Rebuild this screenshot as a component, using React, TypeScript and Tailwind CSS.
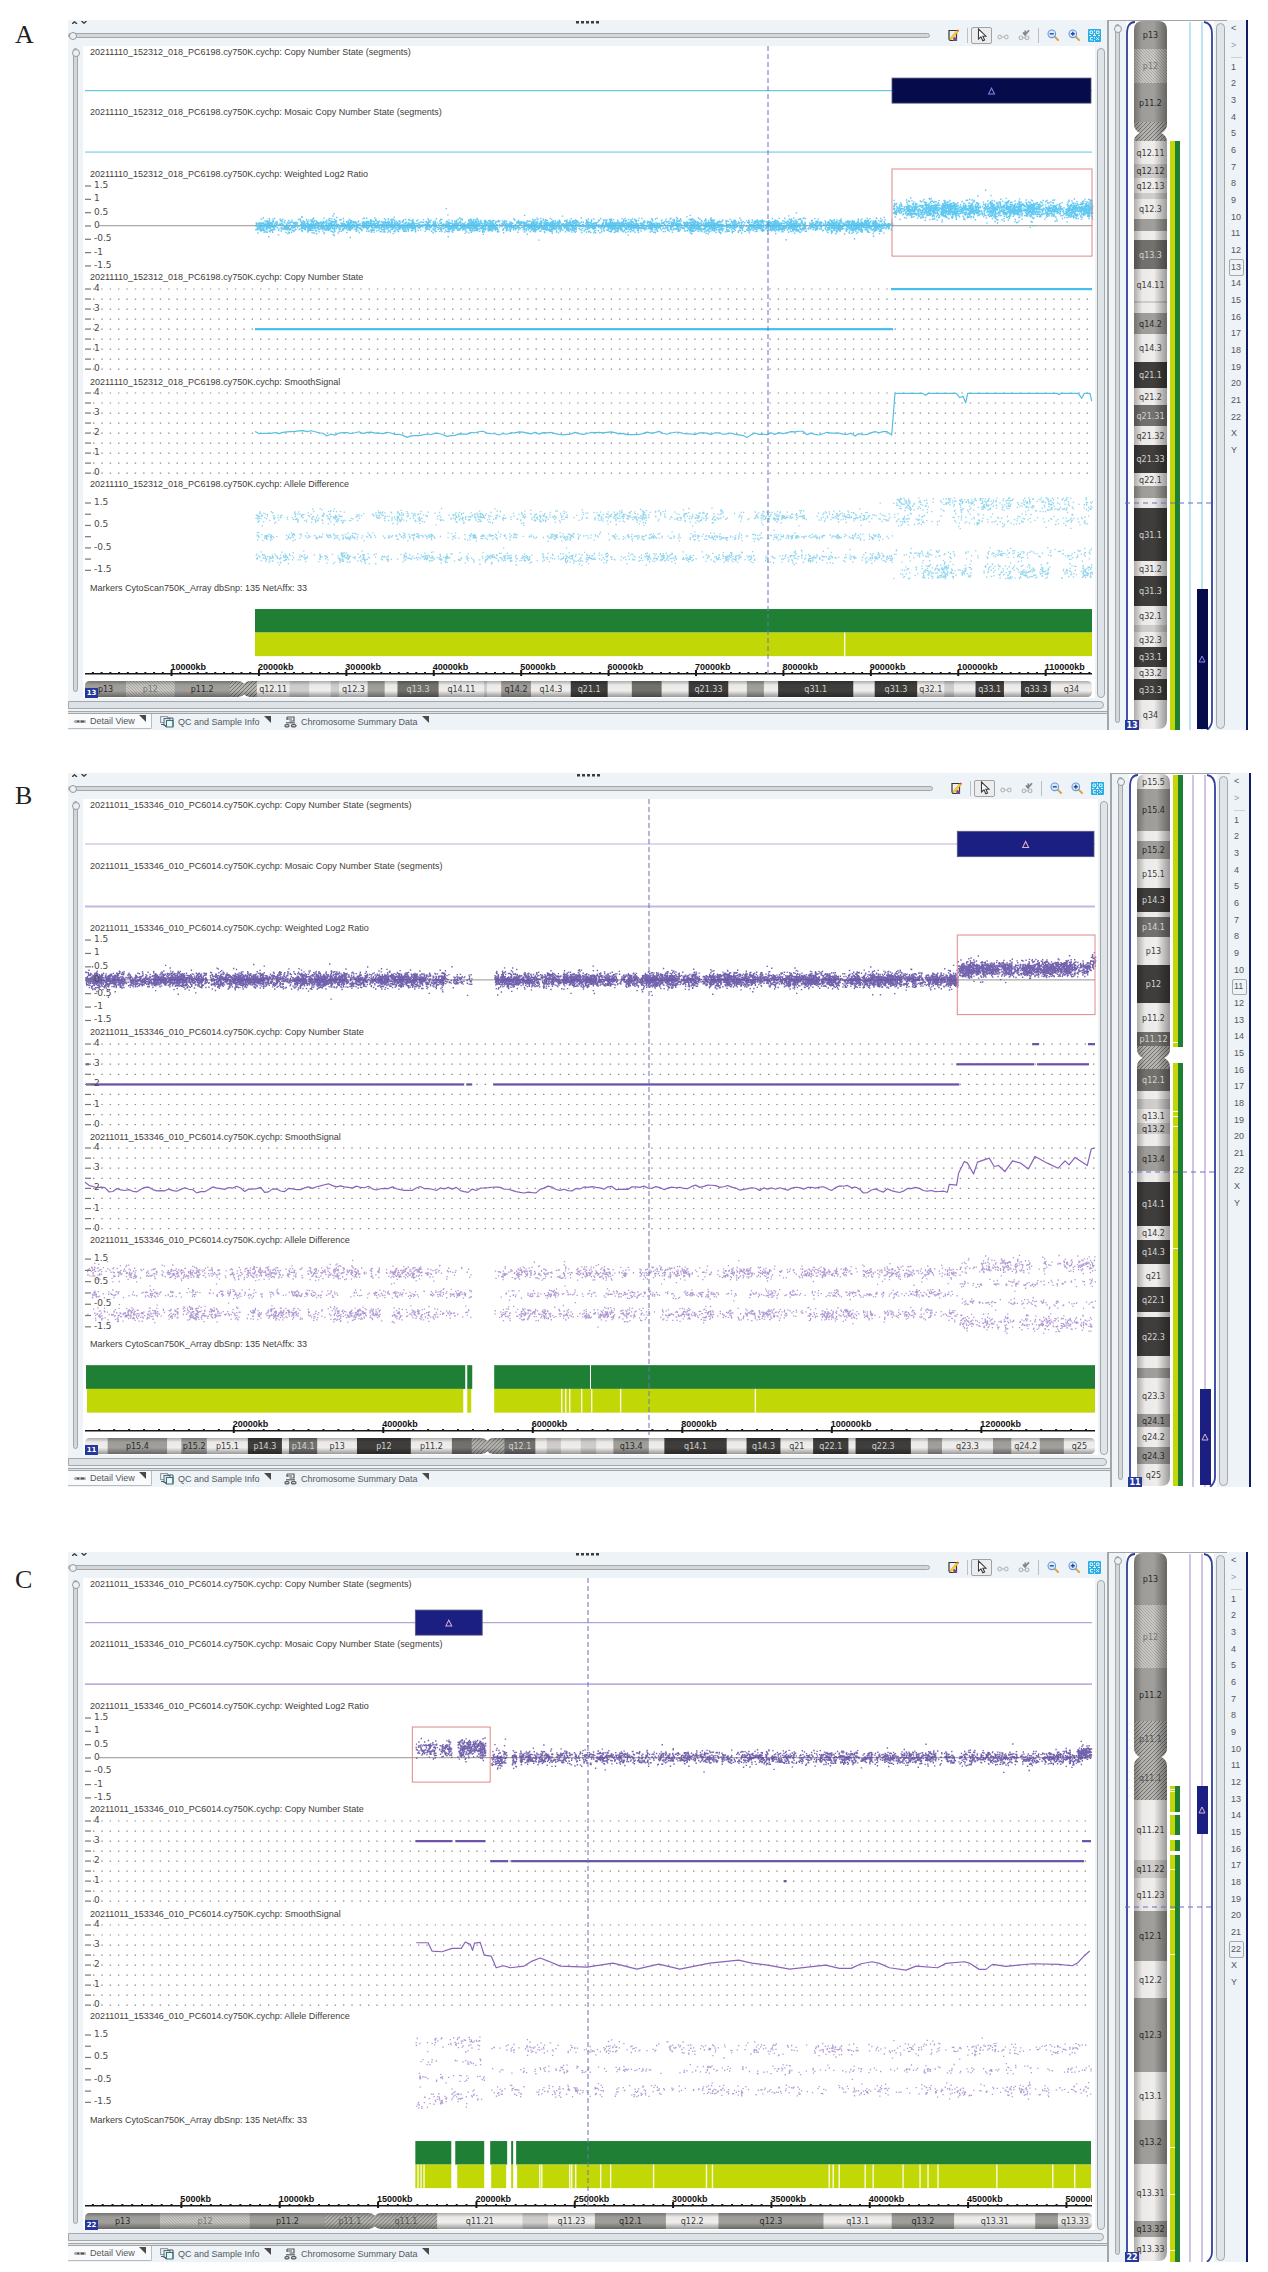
import React from "react";

type Tone = "light" | "pale" | "mid" | "dark" | "black" | "hatch" | "stalk";
type Band = [end: number, tone: Tone, label?: string];
type Span = [number, number];
type Cloud = { x: Span; y: number; s: number; n: number; yEnd?: number };
type Level = { x: Span; v: number };

type PanelData = {
  id: string;
  letter: string;
  letterClass: string;
  rowClass: string;
  panelClass: string;
  sample: string;
  height: number;
  x0: number;
  x1: number;
  point: string;
  pointSoft: string;
  line1: string;
  line2: string;
  sideLine: string;
  block: string;
  blockMark: string;
  segment: Span;
  box: [number, number, number, number];
  ratio: Cloud[];
  levels: Level[];
  smooth: Span[];
  allele: Cloud[];
  green: Span[];
  lime: Span[];
  limeGaps: number[];
  cursor: number;
  rulerStart: number;
  rulerEnd: number;
  major: number;
  chromosome: string;
  bands: Band[];
  waist: number;
  sideGreen: Span[];
  sideGaps: number[];
  sideBlock: Span;
  sideCursor: number;
};

const SANS = "font-['Liberation_Sans',Arial,sans-serif]";
const DEJA = "'DejaVu Sans', Verdana, sans-serif";

const TONES: Record<Tone, { fill: string; text: string }> = {
  light: { fill: "#efeeec", text: "#3a3a3a" },
  pale: { fill: "#cfcecc", text: "#2d2d2d" },
  mid: { fill: "#a09f9b", text: "#2a2a2a" },
  dark: { fill: "#72716e", text: "#d2d2d0" },
  black: { fill: "#3f3e3c", text: "#d2d2d0" },
  hatch: { fill: "url(#hatch)", text: "#777674" },
  stalk: { fill: "url(#stalk)", text: "#555452" },
};

function random(seed: number) {
  let a = seed;
  return () => {
    a = (a + 0x6d2b79f5) | 0;
    let t = Math.imul(a ^ (a >>> 15), 1 | a);
    t = (t + Math.imul(t ^ (t >>> 7), 61 | t)) ^ t;
    return ((t ^ (t >>> 14)) >>> 0) / 4294967296;
  };
}

function scatter(clouds: Cloud[], seed: number, clump: number, dot: number, min = -99, max = 999) {
  const r = random(seed);
  let d = "";
  clouds.forEach((c, i) => {
    const w = c.x[1] - c.x[0];
    const count = Math.round(w * c.n);
    for (let k = 0; k < count; k++) {
      const x = c.x[0] + r() * w;
      const density =
        0.5 + 0.28 * Math.sin(x * 0.31 + seed + i * 2) + 0.28 * Math.sin(x * 0.083 + i * 5) + 0.2 * Math.sin(x * 0.9 + i);
      if (r() < clump * (1 - density)) continue;
      let g = (r() + r() + r() + r() - 2) * 1.7;
      if (r() < 0.04) g *= 1.9;
      const mid = c.yEnd === undefined ? c.y : c.y + ((c.yEnd - c.y) * (x - c.x[0])) / w;
      const y = mid + g * c.s;
      if (y < min || y > max) continue;
      d += `M${x.toFixed(1)} ${y.toFixed(1)}h${dot}v${dot}h-${dot}z`;
    }
  });
  return d;
}

function wander(from: number, to: number, level: number, amp: number, seed: number): Span[] {
  const r = random(seed);
  const out: Span[] = [];
  let y = 0;
  for (let x = from; x < to; x += 4) {
    y = y * 0.65 + (r() - 0.5) * amp * 2;
    if (r() < 0.04) y += amp * 1.1;
    out.push([x, level + y]);
  }
  return out;
}

const crop = (pts: Span[], x0: number, top: number): Span[] =>
  pts.map(([x, y]) => [x0 + x / 3, (y - top) / 3 + 5] as Span);

const bandsA: Band[] = [
  [29, "mid", "p13"], [63, "hatch", "p12"], [102, "mid", "p11.2"], [121, "stalk"],
  [144, "light", "q12.11"], [158, "pale", "q12.12"], [173, "light", "q12.13"], [179, "pale"],
  [199, "light", "q12.3"], [211, "mid"], [220, "light"], [249, "dark", "q13.3"],
  [281, "light", "q14.11"], [283, "pale"], [293, "light"], [314, "mid", "q14.2"],
  [342, "light", "q14.3"], [368, "black", "q21.1"], [385, "light", "q21.2"], [406, "dark", "q21.31"],
  [425, "light", "q21.32"], [453, "black", "q21.33"], [466, "light", "q22.1"], [478, "mid"],
  [488, "light"], [541, "black", "q31.1"], [556, "light", "q31.2"], [586, "black", "q31.3"],
  [605, "light", "q32.1"], [612, "pale"], [627, "light", "q32.3"], [647, "black", "q33.1"],
  [659, "light", "q33.2"], [680, "black", "q33.3"], [709, "light", "q34"],
];

const bandsB: Band[] = [
  [16, "light", "p15.5"], [58, "mid", "p15.4"], [68, "light"], [86, "mid", "p15.2"],
  [115, "light", "p15.1"], [139, "black", "p14.3"], [144, "light"], [164, "dark", "p14.1"],
  [192, "light", "p13"], [230, "black", "p12"], [259, "light", "p11.2"], [273, "dark", "p11.12"],
  [296, "stalk"], [318, "dark", "q12.1"], [326, "light"], [336, "pale"], [350, "light", "q13.1"],
  [361, "pale", "q13.2"], [373, "light"], [398, "mid", "q13.4"], [409, "light"],
  [453, "black", "q14.1"], [467, "light", "q14.2"], [491, "black", "q14.3"], [514, "light", "q21"],
  [539, "black", "q22.1"], [544, "light"], [583, "black", "q22.3"], [595, "light"], [605, "mid"],
  [641, "light", "q23.3"], [654, "mid", "q24.1"], [674, "light", "q24.2"], [691, "mid", "q24.3"],
  [713, "light", "q25"],
];

const bandsC: Band[] = [
  [53, "mid", "p13"], [116, "hatch", "p12"], [169, "mid", "p11.2"], [204, "stalk", "p11.1"],
  [248, "stalk", "q11.1"], [308, "light", "q11.21"], [326, "pale", "q11.22"], [359, "light", "q11.23"],
  [409, "mid", "q12.1"], [446, "light", "q12.2"], [520, "mid", "q12.3"], [568, "light", "q13.1"],
  [612, "mid", "q13.2"], [669, "light", "q13.31"], [685, "mid", "q13.32"], [709, "light", "q13.33"],
];

const violet = {
  point: "#5b47a0",
  pointSoft: "#8764bb",
  sideLine: "#b59dd3",
  block: "#1b1f82",
  blockMark: "#d9b3cf",
  sample: "20211011_153346_010_PC6014.cy750K.cychp:",
};

const panels: PanelData[] = [
  {
    id: "a",
    letter: "A",
    letterClass: "pt-[1px]",
    rowClass: "pt-5 pr-5",
    panelClass: "min-h-[710px]",
    sample: "20211110_152312_018_PC6198.cy750K.cychp:",
    height: 710,
    x0: 86,
    x1: 1093,
    point: "#45bfee",
    pointSoft: "#55bfe4",
    line1: "#6cc9df",
    line2: "#a6dcf0",
    sideLine: "#93d3ec",
    block: "#060c4b",
    blockMark: "#8f86e8",
    segment: [893, 1092],
    box: [893, -11, 200, 87],
    ratio: [
      { x: [256, 893], y: 45, s: 3, n: 14 },
      { x: [894, 1093], y: 29, s: 4, n: 19 },
    ],
    levels: [
      { x: [256, 894], v: 2 },
      { x: [892, 1093], v: 4 },
    ],
    smooth: [
      ...wander(256, 892, 45, 1.6, 7),
      ...crop(
        [[158, 192], [168, 67], [250, 67], [260, 73], [267, 67], [352, 67], [362, 80], [372, 76], [380, 95], [386, 67], [655, 67], [660, 71], [665, 67], [718, 67], [728, 82], [736, 67], [753, 67], [758, 90]],
        840,
        66
      ),
    ],
    allele: [
      { x: [256, 893], y: 26, s: 3, n: 3 },
      { x: [256, 893], y: 46, s: 1.8, n: 2 },
      { x: [256, 893], y: 67, s: 2.6, n: 3 },
      { x: [894, 1093], y: 12, s: 5, n: 4.4 },
      { x: [894, 1093], y: 30, s: 3, n: 1.5 },
      { x: [894, 1093], y: 63, s: 3, n: 1.5 },
      { x: [894, 1093], y: 82, s: 5, n: 4.4 },
    ],
    green: [[256, 1093]],
    lime: [[256, 1093]],
    limeGaps: [845],
    cursor: 768,
    rulerStart: 100,
    rulerEnd: 115300,
    major: 10000,
    chromosome: "13",
    bands: bandsA,
    waist: 112,
    sideGreen: [[121, 710]],
    sideGaps: [],
    sideBlock: [569, 709],
    sideCursor: 483,
  },
  {
    ...violet,
    id: "b",
    letter: "B",
    letterClass: "pt-[9px]",
    rowClass: "pt-[43px] pr-[17px]",
    panelClass: "min-h-[714px]",
    height: 714,
    x0: 84,
    x1: 1096,
    line1: "#d6caea",
    line2: "#c4b5e1",
    segment: [958, 1095],
    box: [958, 1, 138, 79],
    ratio: [
      { x: [84, 446], y: 45, s: 3.6, n: 18 },
      { x: [446, 471], y: 45, s: 3, n: 5 },
      { x: [494, 958], y: 45, s: 3.4, n: 18 },
      { x: [958, 1088], y: 34, s: 3.6, n: 20 },
      { x: [1088, 1096], y: 31, yEnd: 25, s: 3.4, n: 20 },
    ],
    levels: [
      { x: [85, 88], v: 3 },
      { x: [85, 464], v: 2 },
      { x: [466, 472], v: 2 },
      { x: [493, 960], v: 2 },
      { x: [957, 1035], v: 3 },
      { x: [1038, 1090], v: 3 },
      { x: [1033, 1040], v: 4 },
      { x: [1089, 1096], v: 4 },
    ],
    smooth: [
      [84, 39],
      [88, 42],
      ...wander(92, 950, 45, 2.2, 23),
      ...crop(
        [[330, 188], [352, 190], [358, 155], [375, 120], [385, 125], [403, 157], [415, 122], [450, 110], [465, 135], [478, 132], [497, 150], [520, 118], [545, 125], [568, 142], [588, 105], [625, 125], [657, 140], [678, 118], [690, 130], [708, 108], [745, 132], [757, 82], [767, 80]],
        840,
        80
      ),
    ],
    allele: [
      { x: [86, 115], y: 25, s: 4, n: 2.4 },
      { x: [115, 430], y: 26, s: 3.2, n: 4.4 },
      { x: [430, 471], y: 26, s: 3, n: 1.4 },
      { x: [494, 958], y: 26, s: 3, n: 3.8 },
      { x: [90, 471], y: 47, s: 2, n: 2.1 },
      { x: [494, 958], y: 47, s: 2, n: 2 },
      { x: [86, 115], y: 67, s: 3.5, n: 2.4 },
      { x: [115, 430], y: 67, s: 3.2, n: 4.4 },
      { x: [430, 471], y: 67, s: 3, n: 1.4 },
      { x: [494, 958], y: 67, s: 3, n: 3.8 },
      { x: [960, 1096], y: 20, yEnd: 17, s: 3.8, n: 4 },
      { x: [960, 1096], y: 38, yEnd: 36, s: 2, n: 1.4 },
      { x: [960, 1096], y: 55, yEnd: 57, s: 2, n: 1.4 },
      { x: [960, 1096], y: 75, yEnd: 77, s: 3.8, n: 4 },
    ],
    green: [[85, 465], [467, 472], [494, 590], [591, 1096]],
    lime: [[86, 463], [467, 471], [494, 1096]],
    limeGaps: [561, 565, 569, 581, 591, 620, 755],
    cursor: 648,
    rulerStart: 100,
    rulerEnd: 135200,
    major: 20000,
    chromosome: "11",
    bands: bandsB,
    waist: 284,
    sideGreen: [[2, 274], [290, 713]],
    sideGaps: [269, 338, 343, 353, 475],
    sideBlock: [616, 712],
    sideCursor: 399,
  },
  {
    ...violet,
    id: "c",
    letter: "C",
    letterClass: "pt-[14px]",
    rowClass: "pt-[65px] pr-5",
    panelClass: "min-h-[710px]",
    height: 710,
    x0: 84,
    x1: 1093,
    line1: "#b9a2dc",
    line2: "#c0aee0",
    segment: [415, 482],
    box: [412, 15, 78, 55],
    ratio: [
      { x: [415, 451], y: 36, s: 4, n: 9 },
      { x: [457, 485], y: 36, s: 4.4, n: 15 },
      { x: [491, 506], y: 46, s: 4.4, n: 9 },
      { x: [511, 516], y: 46, s: 4, n: 9 },
      { x: [519, 1078], y: 45, s: 3.3, n: 7 },
      { x: [1078, 1092], y: 43, yEnd: 38, s: 3.6, n: 14 },
    ],
    levels: [
      { x: [415, 452], v: 3 },
      { x: [455, 485], v: 3 },
      { x: [490, 508], v: 2 },
      { x: [511, 1085], v: 2 },
      { x: [1083, 1092], v: 3 },
      { x: [784, 787], v: 1 },
    ],
    smooth: [
      ...crop(
        [[1068, 125], [1103, 125], [1115, 150], [1145, 152], [1175, 142], [1203, 142], [1215, 123], [1230, 130], [1237, 148], [1243, 126], [1260, 124], [1272, 162], [1293, 165], [1308, 200], [1330, 194], [1350, 200]],
        60,
        72
      ),
      [524, 46], [532, 41], [540, 38], [548, 41], [560, 46], [587, 47], [600, 45], [613, 43], [637, 49], [659, 44], [680, 49], [710, 43], [739, 40], [752, 43], [768, 45], [790, 49], [826, 45],
      ...crop(
        [[0, 202], [35, 202], [65, 188], [98, 182], [120, 187], [150, 200], [200, 207], [230, 195], [295, 200], [320, 187], [375, 182], [390, 186], [420, 205], [440, 205], [460, 190], [500, 196], [580, 188], [660, 190], [700, 194], [715, 186], [735, 165], [752, 150]],
        840,
        72
      ),
    ],
    allele: [
      { x: [415, 484], y: 20, s: 3.4, n: 1.8 },
      { x: [417, 484], y: 39, s: 2, n: 0.7 },
      { x: [417, 484], y: 55, s: 2.4, n: 0.8 },
      { x: [415, 484], y: 75, s: 4, n: 1.8 },
      { x: [491, 1092], y: 26, s: 3.2, n: 1.4 },
      { x: [491, 1092], y: 47, s: 2, n: 0.9 },
      { x: [491, 1092], y: 68, s: 3.2, n: 1.4 },
    ],
    green: [[415, 451], [455, 484], [490, 507], [511, 513], [516, 1092]],
    lime: [[415, 451], [457, 484], [491, 506], [511, 513], [517, 1092]],
    limeGaps: [417, 420, 423, 539, 541, 569, 571, 575, 600, 610, 653, 706, 712, 829, 833, 839, 865, 873, 903, 920, 928, 938, 997, 1053, 1075],
    cursor: 587,
    rulerStart: 100,
    rulerEnd: 51300,
    major: 5000,
    chromosome: "22",
    bands: bandsC,
    waist: 204,
    sideGreen: [[234, 260], [263, 283], [288, 299], [303, 710]],
    sideGaps: [237, 239, 317, 357, 402, 595, 642, 698],
    sideBlock: [234, 282],
    sideCursor: 355,
  },
];

function Plot({
  panel,
  h,
  children,
  overlay,
}: {
  panel: PanelData;
  h: number;
  children?: React.ReactNode;
  overlay?: React.ReactNode;
}) {
  return (
    <svg className="block h-0 w-full flex-1 overflow-visible" aria-hidden="true">
      <svg
        width="100%"
        height="100%"
        viewBox={`${panel.x0} 0 ${panel.x1 - panel.x0} ${h}`}
        preserveAspectRatio="none"
        overflow="visible"
      >
        {children}
      </svg>
      {overlay}
    </svg>
  );
}

function Axis({ h, top, step, labels }: { h: number; top: number; step: number; labels: string[] }) {
  return (
    <g fontFamily={DEJA} fontSize="9" fill="#4c4945">
      {labels.map((label, i) => {
        const y = ((top + i * step) / h) * 100;
        return (
          <g key={i}>
            <line x1="0" x2="6" y1={`${y}%`} y2={`${y}%`} stroke="#7b7773" strokeWidth="1.2" />
            {label && (
              <text x="9" y={`${y}%`} dy="2">
                {label}
              </text>
            )}
          </g>
        );
      })}
    </g>
  );
}

function Track({ title, size, children }: { title: string; size: string; children: React.ReactNode }) {
  return (
    <section className={`flex shrink-0 grow flex-col ${size}`}>
      <h2 className="h-3 shrink-0 pl-[5px] text-[9px] leading-3 whitespace-nowrap text-[#3f3c39]">{title}</h2>
      {children}
    </section>
  );
}

function DotGrid({ panel, top, step }: { panel: PanelData; top: number; step: number }) {
  return (
    <g stroke="#8d8a88" strokeWidth="1.2" strokeDasharray="1.4 6.95">
      {Array.from({ length: 9 }, (_, i) => (
        <line key={i} x1={panel.x0 + 8} x2={panel.x1} y1={top + i * step} y2={top + i * step} />
      ))}
    </g>
  );
}

function shape(length: number, thick: number, waist: number, r: number, k: number, flip: boolean) {
  const p = (a: number, b: number) => (flip ? `${a} ${b}` : `${b} ${a}`);
  const n = thick * 0.17;
  return (
    `M${p(0, r)}Q${p(0, 0)} ${p(r, 0)}L${p(waist - k, 0)}Q${p(waist - k / 3, 0)} ${p(waist, n)}` +
    `Q${p(waist + k / 3, 0)} ${p(waist + k, 0)}L${p(length - r, 0)}Q${p(length, 0)} ${p(length, r)}` +
    `L${p(length, thick - r)}Q${p(length, thick)} ${p(length - r, thick)}L${p(waist + k, thick)}` +
    `Q${p(waist + k / 3, thick)} ${p(waist, thick - n)}Q${p(waist - k / 3, thick)} ${p(waist - k, thick)}` +
    `L${p(r, thick)}Q${p(0, thick)} ${p(0, thick - r)}Z`
  );
}

function HorizontalIdeogram({ panel }: { panel: PanelData }) {
  const total = panel.height - 1;
  const scale = (panel.x1 - panel.x0) / total;
  const starts = [0, ...panel.bands.map((b) => b[0])];
  return (
    <div className="relative mt-[3px] mb-px shrink-0">
      <svg className="block h-4 w-full" role="img" aria-label={`Chromosome ${panel.chromosome} bands`}>
        <svg width="100%" height="100%" viewBox={`0 0 ${total * scale} 16`} preserveAspectRatio="none">
          <clipPath id={`bar-${panel.id}`}>
            <path d={shape(total * scale, 16, panel.waist * scale, 5, 6, true)} />
          </clipPath>
          <g clipPath={`url(#bar-${panel.id})`}>
            {panel.bands.map(([end, tone], i) => (
              <rect key={i} x={starts[i] * scale} width={(end - starts[i]) * scale + 0.3} height="16" fill={TONES[tone].fill} />
            ))}
            <rect width={total * scale} height="16" fill="url(#shadeY)" />
          </g>
        </svg>
        {panel.bands.map(([end, tone, label], i) => {
          if (!label) return null;
          const textWidth = (label.length - 1) * 5.1 + 2.5;
          if ((end - starts[i]) * scale < textWidth + 2) return null;
          return (
            <text
              key={i}
              x={`${((starts[i] + end) / 2 / total) * 100}%`}
              y="11"
              textAnchor="middle"
              fontFamily={DEJA}
              fontSize="8"
              fill={TONES[tone].text}
            >
              {label}
            </text>
          );
        })}
      </svg>
      <span className="absolute -bottom-px left-0 h-[10px] w-[13px] bg-[#26389a] text-center font-['DejaVu_Sans',sans-serif] text-[7px] leading-[11px] font-bold text-white">
        {panel.chromosome}
      </span>
    </div>
  );
}

function Ruler({ panel }: { panel: PanelData }) {
  const span = panel.rulerEnd - panel.rulerStart;
  const minor = panel.major / 10;
  const ticks: number[] = [];
  for (let v = minor; v < panel.rulerEnd; v += minor) ticks.push(v);
  const at = (v: number) => `${((v - panel.rulerStart) / span) * 100}%`;
  return (
    <svg className="block h-4 w-full shrink-0">
      <rect y="11" width="100%" height="1.5" fill="#161616" />
      {ticks.map((v) =>
        v % panel.major === 0 ? (
          <svg key={v} x={at(v)} overflow="visible">
            <rect x="-1" y="8" width="2" height="6" fill="#161616" />
            <text x="-1" y="8" fontFamily="Liberation Sans, Arial, sans-serif" fontWeight="700" fontSize="9" fill="#111">
              {v}kb
            </text>
          </svg>
        ) : (
          <svg key={v} x={at(v)} overflow="visible">
            <rect x="-1" y="10" width="2" height="2" fill="#161616" />
          </svg>
        )
      )}
    </svg>
  );
}

function Triangle({ x, y, color }: { x: number; y: number; color: string }) {
  return <path d={`M${x - 3} ${y + 3}L${x} ${y - 3}L${x + 3} ${y + 3}Z`} fill="none" stroke={color} strokeWidth="1" />;
}

function Tracks({ panel }: { panel: PanelData }) {
  const seg = panel.segment;
  const stateY = (v: number) => 5 + (4 - v) * 20;
  const [bx, by, bw, bh] = panel.box;
  const cursor = `${((panel.cursor - panel.x0) / (panel.x1 - panel.x0)) * 100}%`;
  return (
    <div className="flex min-w-0 flex-1 flex-col bg-white pr-[3px] pl-[2px]">
      <div className="relative flex grow flex-col">
        <Track title={`${panel.sample} Copy Number State (segments)`} size="h-[60px]">
          <Plot panel={panel} h={48}>
            <line x1={panel.x0} x2={panel.x1} y1="32.5" y2="32.5" stroke={panel.line1} strokeWidth="1.3" />
            <rect x={seg[0]} y="20" width={seg[1] - seg[0]} height="25" fill={panel.block} stroke="#55597a" strokeWidth="0.8" />
            <Triangle x={(seg[0] + seg[1]) / 2} y={33} color={panel.blockMark} />
          </Plot>
        </Track>
        <Track title={`${panel.sample} Mosaic Copy Number State (segments)`} size="h-[62px]">
          <Plot panel={panel} h={50}>
            <line x1={panel.x0} x2={panel.x1} y1="34" y2="34" stroke={panel.line2} strokeWidth="1.8" />
          </Plot>
        </Track>
        <Track title={`${panel.sample} Weighted Log2 Ratio`} size="h-[103px]">
          <Plot
            panel={panel}
            h={91}
            overlay={<Axis h={91} top={6} step={13.3} labels={["1.5", "1", "0.5", "0", "-0.5", "-1", "-1.5"]} />}
          >
            <line x1={panel.x0 + 14} x2={panel.x1} y1="45.5" y2="45.5" stroke="#aaa9a3" strokeWidth="1.2" />
            <path d={scatter(panel.ratio, 11 + panel.height + panel.cursor, 0.7, 1.4)} fill={panel.point} fillOpacity="0.85" />
            <rect x={bx} y={by} width={bw} height={bh} fill="none" stroke="#dd8a88" strokeWidth="1" />
          </Plot>
        </Track>
        <Track title={`${panel.sample} Copy Number State`} size="h-[104px]">
          <Plot
            panel={panel}
            h={92}
            overlay={<Axis h={92} top={6} step={10} labels={["4", "", "3", "", "2", "", "1", "", "0"]} />}
          >
            <DotGrid panel={panel} top={6} step={10} />
            {panel.levels.map((l, i) => (
              <rect key={i} x={l.x[0]} width={l.x[1] - l.x[0]} y={stateY(l.v)} height="2.2" fill={panel.id === "a" ? panel.point : "#6a51a8"} />
            ))}
          </Plot>
        </Track>
        <Track title={`${panel.sample} SmoothSignal`} size="h-[102px]">
          <Plot
            panel={panel}
            h={90}
            overlay={<Axis h={90} top={5} step={10} labels={["4", "", "3", "", "2", "", "1", "", "0"]} />}
          >
            <DotGrid panel={panel} top={5} step={10} />
            <path
              d={"M" + panel.smooth.map(([x, y]) => `${x.toFixed(1)} ${y.toFixed(1)}`).join("L")}
              fill="none"
              stroke={panel.pointSoft}
              strokeWidth="1.2"
              strokeLinejoin="round"
            />
          </Plot>
        </Track>
        <Track title={`${panel.sample} Allele Difference`} size="h-[104px]">
          <Plot
            panel={panel}
            h={92}
            overlay={<Axis h={92} top={13} step={11.2} labels={["1.5", "", "0.5", "", "-0.5", "", "-1.5"]} />}
          >
            <path d={scatter(panel.allele, 40 + panel.cursor, 0.95, 1.3, 7, 88)} fill={panel.pointSoft} fillOpacity="0.65" />
          </Plot>
        </Track>
        <Track title="Markers CytoScan750K_Array dbSnp: 135 NetAffx: 33" size="h-[80px]">
          <Plot panel={panel} h={68}>
            {panel.green.map(([a, b]) => (
              <rect key={a} x={a} width={b - a} y="15" height="23.5" fill="#1f8035" />
            ))}
            {panel.lime.map(([a, b]) => (
              <rect key={a} x={a} width={b - a} y="38.5" height="23.5" fill="#c2d706" />
            ))}
            {panel.limeGaps.map((x) => (
              <rect key={x} x={x} width="1.4" y="38.5" height="23.5" fill="#f7fae0" />
            ))}
          </Plot>
        </Track>
        <Ruler panel={panel} />
        <svg className="absolute top-0 h-full w-[2px]" style={{ left: cursor }} aria-hidden="true">
          <line x1="1" x2="1" y1="0" y2="100%" stroke="#6d73b5" strokeWidth="1" strokeDasharray="5 3" />
        </svg>
      </div>
      <HorizontalIdeogram panel={panel} />
    </div>
  );
}

function SideIdeogram({ panel }: { panel: PanelData }) {
  const H = panel.height;
  const starts = [1, ...panel.bands.map((b) => b[0])];
  const [b0, b1] = panel.sideBlock;
  return (
    <svg
      className="w-[89px] shrink-0 self-stretch bg-white"
      viewBox={`0 1 89 ${H - 1}`}
      role="img"
      aria-label={`Chromosome ${panel.chromosome} overview`}
    >
      <rect x="0" y="1" width="1" height={H} fill="#eef3f7" />
      <path d={`M2 ${H}V14Q2 2 10 2M79 2Q87 3 87 14V${H - 10}Q87 ${H - 4} 82 ${H}`} fill="none" stroke="#32409c" strokeWidth="1.8" />
      <path d={`M65 2V${H}M77 2V${H}`} stroke={panel.sideLine} strokeWidth="1.2" />
      <clipPath id={`side-${panel.id}`}>
        <path d={shape(H - 2, 33, panel.waist, 9, 9, false)} transform="translate(9 1)" />
      </clipPath>
      <g clipPath={`url(#side-${panel.id})`}>
        {panel.bands.map(([end, tone], i) => (
          <rect key={i} x="9" width="33" y={starts[i]} height={end - starts[i] + 0.3} fill={TONES[tone].fill} />
        ))}
        <rect x="9" y="0" width="33" height={H} fill="url(#shadeX)" />
      </g>
      {panel.bands.map(([end, tone, label], i) =>
        label ? (
          <text
            key={i}
            x="25.5"
            y={(starts[i] + end) / 2 + 3}
            textAnchor="middle"
            fontFamily={DEJA}
            fontSize="8"
            fill={TONES[tone].text}
          >
            {label}
          </text>
        ) : null
      )}
      {panel.sideGreen.map(([a, b]) => (
        <g key={a}>
          <rect x="45" y={a} width="5" height={b - a} fill="#c2d706" />
          <rect x="50" y={a} width="5" height={b - a} fill="#1f8035" />
        </g>
      ))}
      {panel.sideGaps.map((y) => (
        <rect key={y} x="45" y={y} width="5" height="1" fill="#fbfcec" />
      ))}
      <rect x="72" y={b0} width="11" height={b1 - b0} fill={panel.block} />
      <Triangle x={77} y={(b0 + b1) / 2} color={panel.blockMark} />
      <line x1="0" x2="87" y1={panel.sideCursor} y2={panel.sideCursor} stroke="#6b68c4" strokeWidth="1" strokeDasharray="5 4" />
      <rect x="0" y={H - 10} width="14" height="10" fill="#26389a" />
      <text x="7" y={H - 2} textAnchor="middle" fontFamily={DEJA} fontSize="8" fontWeight="700" fill="#fff">
        {panel.chromosome}
      </text>
    </svg>
  );
}

function IconButton({ label, active, children }: { label: string; active?: boolean; children: React.ReactNode }) {
  return (
    <button
      type="button"
      aria-label={label}
      className={
        active
          ? "flex h-[17px] w-[21px] shrink-0 items-center justify-center rounded-xs border border-[#a3a3a3] bg-[#ecedef]"
          : "flex h-[17px] w-[21px] shrink-0 items-center justify-center"
      }
    >
      {children}
    </button>
  );
}

function Divider() {
  return (
    <span className="flex w-2 shrink-0 justify-center">
      <span className="h-[15px] w-px bg-[#bcc0c4]" />
    </span>
  );
}

function Magnifier({ plus }: { plus?: boolean }) {
  return (
    <svg className="size-3" viewBox="0 0 12 12" fill="none">
      <path d="M7.4 7.4L11 11" stroke="#d9a441" strokeWidth="2" strokeLinecap="round" />
      <circle cx="4.8" cy="4.8" r="3.8" fill="#dcebfb" stroke="#6a97d6" strokeWidth="1.1" />
      <path d={plus ? "M2.8 4.8h4M4.8 2.8v4" : "M2.8 4.8h4"} stroke="#24479c" strokeWidth="1.4" />
    </svg>
  );
}

function Toolbar() {
  return (
    <div className="flex shrink-0 items-center pr-[2px]">
      <IconButton label="Edit notes">
        <svg className="h-[14px] w-3" viewBox="0 0 12 14">
          <path d="M2 2.5H9.5V12.5H3L2 11Z" fill="#f0eef4" stroke="#353535" strokeWidth="1.2" />
          <path d="M6 12.8L6.6 8.5L10 10.5V13Z" fill="#7d4b8c" />
          <path d="M3.5 9.8L10 2.3L11.4 3.5L5 11L2.8 11.8Z" fill="#f7d21c" stroke="#dba21c" strokeWidth="0.5" />
          <path d="M9.6 2.6L10.6 1.4L12 2.6L11.2 3.8Z" fill="#de3d3d" />
        </svg>
      </IconButton>
      <Divider />
      <IconButton label="Select" active>
        <svg className="h-[14px] w-[10px]" viewBox="0 0 10 14">
          <path d="M1.5 1V11L4 8.8L5.8 12.8L7.6 12L5.9 8.2H9Z" fill="#fff" stroke="#3c3c3c" strokeWidth="1.1" />
        </svg>
      </IconButton>
      <IconButton label="Link">
        <svg className="mt-1 h-2 w-3" viewBox="0 0 12 8" fill="none" stroke="#b9bcbf" strokeWidth="1.2">
          <circle cx="2.7" cy="4" r="1.8" />
          <circle cx="9.3" cy="4" r="1.8" />
          <path d="M4.5 4h3" />
        </svg>
      </IconButton>
      <IconButton label="Unlink">
        <svg className="h-3 w-3" viewBox="0 0 12 12" fill="none" stroke="#b3b6b9" strokeWidth="1.2">
          <circle cx="2.9" cy="8.8" r="1.8" />
          <circle cx="9.1" cy="8.8" r="1.8" />
          <path d="M4.7 8.8h2.6" />
          <path d="M5 3.5L7 6L11 1.2M7.5 1.5L7 4.5" stroke="#808387" strokeWidth="1.7" />
        </svg>
      </IconButton>
      <Divider />
      <IconButton label="Zoom out">
        <Magnifier />
      </IconButton>
      <IconButton label="Zoom in">
        <Magnifier plus />
      </IconButton>
      <IconButton label="Fit to window">
        <svg className="size-[13px]" viewBox="0 0 13 13">
          <rect width="13" height="13" rx="1" fill="#25ade4" />
          <path
            d="M2 2h2.6v2.6H2zM8.4 2H11v2.6H8.4zM5 8.4H2.4V11H5M8.2 8.2L11 11M11 8.2L8.2 11M6.5 1v1.5M6.5 4v2M1 6.5h2M5 6.5h3M10 6.5h2M6.5 8v1.5M6.5 11v1.5"
            fill="none"
            stroke="#e4f6fd"
            strokeWidth="1"
          />
        </svg>
      </IconButton>
    </div>
  );
}

function HSlider({ label }: { label: string }) {
  return (
    <input
      type="range"
      aria-label={label}
      defaultValue={0}
      className="h-2 min-w-0 flex-1 appearance-none bg-transparent [&::-webkit-slider-runnable-track]:h-[5px] [&::-webkit-slider-runnable-track]:rounded-full [&::-webkit-slider-runnable-track]:border [&::-webkit-slider-runnable-track]:border-[#a4a6a8] [&::-webkit-slider-runnable-track]:bg-[#d4d6d8] [&::-webkit-slider-thumb]:-mt-[2px] [&::-webkit-slider-thumb]:size-[8px] [&::-webkit-slider-thumb]:appearance-none [&::-webkit-slider-thumb]:rounded-full [&::-webkit-slider-thumb]:border [&::-webkit-slider-thumb]:border-[#97999b] [&::-webkit-slider-thumb]:bg-[#eef1f4]"
    />
  );
}

function VSlider({ label }: { label: string }) {
  return (
    <input
      type="range"
      aria-label={label}
      defaultValue={0}
      className="min-h-0 w-2 flex-1 appearance-none bg-transparent [writing-mode:vertical-lr] [&::-webkit-slider-runnable-track]:w-[5px] [&::-webkit-slider-runnable-track]:rounded-full [&::-webkit-slider-runnable-track]:border [&::-webkit-slider-runnable-track]:border-[#a4a6a8] [&::-webkit-slider-runnable-track]:bg-[#d4d6d8] [&::-webkit-slider-thumb]:-ml-[2px] [&::-webkit-slider-thumb]:size-[8px] [&::-webkit-slider-thumb]:appearance-none [&::-webkit-slider-thumb]:rounded-full [&::-webkit-slider-thumb]:border [&::-webkit-slider-thumb]:border-[#97999b] [&::-webkit-slider-thumb]:bg-[#eef1f4]"
    />
  );
}

function Corner() {
  return (
    <svg className="mb-[5px] size-[7px]" viewBox="0 0 7 7">
      <path d="M0 0H7V7Z" fill="#4a4a4a" />
    </svg>
  );
}

function Tabs() {
  const tab = "flex items-center gap-1 text-[9px] leading-3 whitespace-nowrap text-[#55585c]";
  return (
    <div role="tablist" className="flex h-4 shrink-0 pb-px">
      <button type="button" role="tab" aria-selected="true" className={`${tab} w-[84px] rounded-br-xs border-r border-b border-[#b9bbbe] bg-[#f8fafb] pl-[6px]`}>
        <svg className="h-[5px] w-3" viewBox="0 0 12 5">
          <rect y="1" width="12" height="3" rx="1.5" fill="#a9abad" />
          <path d="M3 2.5h2M7 2.5h3" stroke="#4c4c4c" strokeWidth="1.4" />
        </svg>
        <span>Detail View</span>
        <Corner />
      </button>
      <button type="button" role="tab" aria-selected="false" className={`${tab} w-[124px] pl-2`}>
        <svg className="h-3 w-[14px]" viewBox="0 0 14 12">
          <rect x="0.6" y="0.6" width="7" height="6" fill="#eef0f2" stroke="#8b9299" />
          <rect x="4" y="2.5" width="6" height="7" fill="#d7e6f0" stroke="#58707f" />
          <rect x="6.5" y="4.5" width="6.5" height="6.5" fill="#e9f6f6" stroke="#3c6c74" />
          <path d="M1 8.5H4L6 11" stroke="#5b5b5b" fill="none" />
          <path d="M8 2h5v8.5" stroke="#3f5f68" fill="none" />
        </svg>
        <span>QC and Sample Info</span>
        <Corner />
      </button>
      <button type="button" role="tab" aria-selected="false" className={`${tab} pl-2`}>
        <svg className="h-3 w-[13px]" viewBox="0 0 13 12" fill="none" stroke="#58595b" strokeWidth="1.2">
          <path d="M3 1H10V5H5.5M3 1V4M3 3H8" />
          <rect x="1" y="8.5" width="4" height="2.4" rx="1.2" fill="#cfd0d2" />
          <rect x="7.5" y="8.5" width="4.5" height="2.4" rx="1.2" fill="#cfd0d2" />
          <path d="M2 6.8H11" />
        </svg>
        <span>Chromosome Summary Data</span>
        <Corner />
      </button>
    </div>
  );
}

const CHROMOSOMES = [...Array.from({ length: 22 }, (_, i) => String(i + 1)), "X", "Y"];

function ChromosomeList({ selected }: { selected: string }) {
  return (
    <nav aria-label="Chromosomes" className="flex w-[19px] shrink-0 flex-col text-[#55565a]">
      <button type="button" aria-label="Previous" className="h-[17px] pl-1 text-left text-[9px] leading-[17px]">
        &lt;
      </button>
      <button type="button" aria-label="Next" className="h-[17px] pl-1 text-left text-[9px] leading-[17px] text-[#9a9b9e]">
        &gt;
      </button>
      <span className="mx-1 mt-[3px] mb-px h-px bg-[#ccd0d3]" />
      <div className="grid h-[400px] auto-rows-fr">
        {CHROMOSOMES.map((c) => (
          <button
            key={c}
            type="button"
            className={
              c === selected
                ? "ml-[2px] w-[15px] rounded-xs border border-[#a5a7aa] pl-px text-left text-[9px] leading-none"
                : "ml-[3px] w-[14px] pl-px text-left text-[9px] leading-none"
            }
          >
            {c}
          </button>
        ))}
      </div>
    </nav>
  );
}

function Panel({ panel }: { panel: PanelData }) {
  return (
    <div className={`flex min-w-0 flex-1 bg-[#eef3f7] ${SANS} ${panel.panelClass}`}>
      <div className="flex min-w-0 flex-1 flex-col">
        <header className="h-[26px] shrink-0">
          <div className="relative flex h-[6px] items-start justify-center pt-px">
            <svg className="absolute top-px left-1 h-[3px] w-4" viewBox="0 0 16 3" fill="none" stroke="#3d3d3d" strokeWidth="1.4">
              <path d="M0 3L2.5 0.8L5 3M9.5 0L12 2.2L14.5 0" />
            </svg>
            <svg className="h-[3px] w-6" viewBox="0 0 24 3" fill="#3d3d3d">
              <path d="M0 0h3v2.5H0zM5 0h3v2.5H5zM10 0h3v2.5h-3zM15 0h3v2.5h-3zM20 0h3v2.5h-3z" />
            </svg>
          </div>
          <div className="flex h-[18px] items-center">
            <HSlider label="Horizontal zoom" />
            <span className="w-3 shrink-0" />
            <Toolbar />
          </div>
        </header>
        <div className="flex flex-1">
          <div className="flex w-[15px] shrink-0 justify-center pt-[2px] pb-[6px]">
            <div className="flex flex-col">
              <VSlider label="Vertical zoom" />
            </div>
          </div>
          <Tracks panel={panel} />
          <div className="flex w-3 shrink-0 px-[2px] pt-[2px]">
            <div className="w-2 rounded-full border border-[#a5a8ab] bg-[#dfe4e8]" />
          </div>
        </div>
        <div className="h-[13px] shrink-0 pt-[3px] pr-[3px]">
          <div className="h-2 rounded-r-full border border-[#a5a8ab] bg-[#dde2e6]" />
        </div>
        <div className="h-[3px] shrink-0 border-y border-[#a3a5a7] bg-[#dfe2e4]" />
        <Tabs />
      </div>
      <aside className="flex shrink-0 border-l-2 border-[#a5a6a8]">
        <div className="flex border-t border-[#a5a6a8]">
          <div className="flex w-4 shrink-0 justify-center pt-[3px] pb-[7px]">
            <div className="flex flex-col">
              <VSlider label="Overview zoom" />
            </div>
          </div>
          <SideIdeogram panel={panel} />
          <div className="flex w-[13px] shrink-0 pt-[2px] pr-[2px] pb-px pl-[2px]">
            <div className="w-[9px] rounded-full border border-[#a5a8ab] bg-[#dfe4e8]" />
          </div>
        </div>
        <ChromosomeList selected={panel.chromosome} />
        <span className="w-[2px] shrink-0 bg-[#101c66]" />
      </aside>
    </div>
  );
}

function Defs() {
  const stops = (
    <>
      <stop offset="0" stopColor="#000" stopOpacity="0.28" />
      <stop offset="0.25" stopColor="#000" stopOpacity="0.02" />
      <stop offset="0.6" stopColor="#000" stopOpacity="0" />
      <stop offset="1" stopColor="#000" stopOpacity="0.36" />
    </>
  );
  return (
    <svg width="0" height="0" className="absolute" aria-hidden="true">
      <defs>
        <pattern id="hatch" width="3" height="3" patternUnits="userSpaceOnUse">
          <rect width="3" height="3" fill="#c9c8c4" />
          <path d="M0 0L3 3M-1 2L1 4M2 -1L4 1" stroke="#a3a29e" strokeWidth="0.8" />
        </pattern>
        <pattern id="stalk" width="4" height="4" patternUnits="userSpaceOnUse">
          <rect width="4" height="4" fill="#b5b4b0" />
          <path d="M0 4L4 0M-1 1L1 -1M3 5L5 3" stroke="#6d6c69" strokeWidth="0.9" />
        </pattern>
        <linearGradient id="shadeX" x1="0" x2="1" y1="0" y2="0">{stops}</linearGradient>
        <linearGradient id="shadeY" x1="0" x2="0" y1="0" y2="1">{stops}</linearGradient>
      </defs>
    </svg>
  );
}

export default function App() {
  return (
    <main className="w-full bg-white pb-[10px]">
      <Defs />
      {panels.map((panel) => (
        <div key={panel.id} className={`flex ${panel.rowClass}`}>
          <h1 className={`w-[68px] shrink-0 pl-[15px] font-['Liberation_Serif',serif] text-[26px] leading-7 text-[#231f20] ${panel.letterClass}`}>
            {panel.letter}
          </h1>
          <Panel panel={panel} />
        </div>
      ))}
    </main>
  );
}
